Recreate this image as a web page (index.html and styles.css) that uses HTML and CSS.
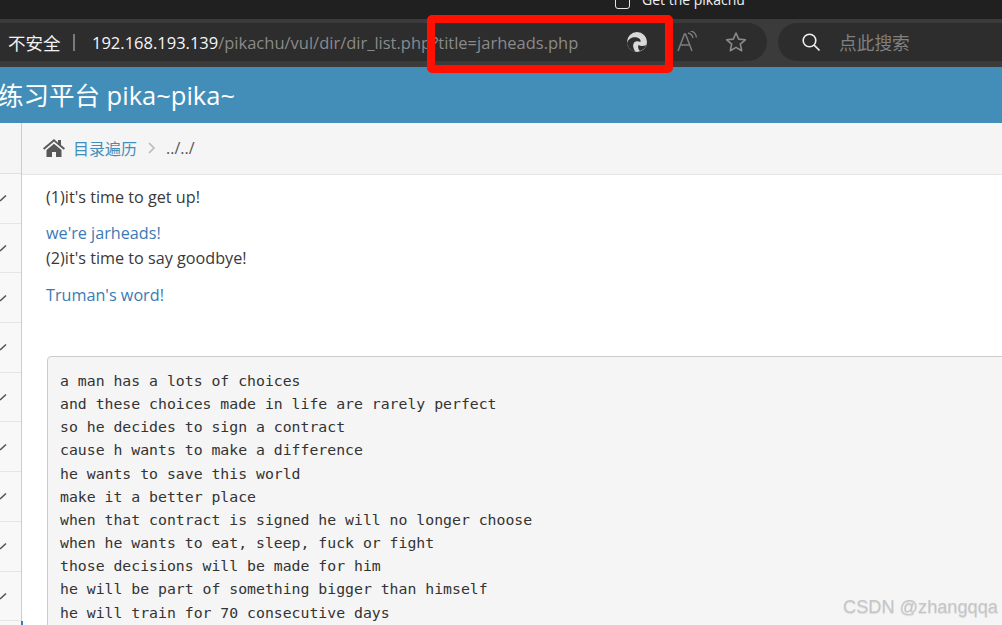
FILE: index.html
```html
<!DOCTYPE html>
<html lang="zh">
<head>
<meta charset="utf-8">
<title>Get the pikachu</title>
<link rel="stylesheet" href="styles.css">
</head>
<body>
<div class="tabbar">
  <span class="tab-icon"></span>
  <span class="tab-title">Get the pikachu</span>
</div>
<div class="toolbar">
  <div class="address">
    <span class="secure">不安全</span>
    <span class="divider"></span>
    <span class="url"><span class="host">192.168.193.139</span>/pikachu/vul/dir/dir_list.php?title=jarheads.php</span>
    <svg class="edge" viewBox="0 0 20 20" width="20" height="20">
      <circle cx="10" cy="10" r="10" fill="#d8d8d8"/>
      <path d="M0 11C1.500 6.500 6 4.500 10 5.500c2.800.7 4 2.600 3.500 4.500-2.500-1.300-5.500-1-6.800 1.200-1.200 2-.6 4.800 1.600 8.500C4 19 .8 15.500 0 11z" fill="#2d2d2d"/>
      <path d="M11.500 13c2 1.300 4.800 1.300 8 0-1.100 2.700-3.500 5-6.500 6-1.700-1.500-2.500-4.200-1.500-6z" fill="#2d2d2d"/>
    </svg>
    <svg class="readaloud" viewBox="0 0 24 22" width="24" height="22">
      <path d="M1 20 7.500 3h1L15 20M3.500 14h9" fill="none" stroke="#7d7d7d" stroke-width="1.500"/>
      <path d="M11 2c3 .5 4.500 2.500 5 5M13.500 0c3.500.5 5.500 3 6 6.500" fill="none" stroke="#7d7d7d" stroke-width="1.300"/>
    </svg>
    <svg class="star" viewBox="0 0 22 22" width="22" height="22">
      <path d="M11 2l2.700 6.100 6.600.7-5 4.400 1.400 6.500L11 16.400l-5.700 3.300 1.400-6.500-5-4.400 6.600-.7z" fill="none" stroke="#8a8a8a" stroke-width="1.600" stroke-linejoin="round"/>
    </svg>
  </div>
  <div class="search">
    <svg class="search-icon" viewBox="0 0 20 20" width="20" height="20">
      <circle cx="8.500" cy="8.500" r="6.300" fill="none" stroke="#f0f0f0" stroke-width="1.600"/>
      <path d="M13 13l5.500 5.500" stroke="#f0f0f0" stroke-width="1.700"/>
    </svg>
    <span class="search-text">点此搜索</span>
  </div>
</div>
<header class="site-header">练习平台 pika~pika~</header>
<div class="layout">
  <aside class="sidebar">
    <div class="side-top"></div>
    <div class="side-row"><svg class="check" viewBox="0 0 8 10" width="8" height="10"><path d="M0 8l6-5.500" stroke="#4a5560" stroke-width="1.600"/></svg></div>
    <div class="side-row"><svg class="check" viewBox="0 0 8 10" width="8" height="10"><path d="M0 8l6-5.500" stroke="#4a5560" stroke-width="1.600"/></svg></div>
    <div class="side-row"><svg class="check" viewBox="0 0 8 10" width="8" height="10"><path d="M0 8l6-5.500" stroke="#4a5560" stroke-width="1.600"/></svg></div>
    <div class="side-row"><svg class="check" viewBox="0 0 8 10" width="8" height="10"><path d="M0 8l6-5.500" stroke="#4a5560" stroke-width="1.600"/></svg></div>
    <div class="side-row"><svg class="check" viewBox="0 0 8 10" width="8" height="10"><path d="M0 8l6-5.500" stroke="#4a5560" stroke-width="1.600"/></svg></div>
    <div class="side-row"><svg class="check" viewBox="0 0 8 10" width="8" height="10"><path d="M0 8l6-5.500" stroke="#4a5560" stroke-width="1.600"/></svg></div>
    <div class="side-row"><svg class="check" viewBox="0 0 8 10" width="8" height="10"><path d="M0 8l6-5.500" stroke="#4a5560" stroke-width="1.600"/></svg></div>
    <div class="side-row"><svg class="check" viewBox="0 0 8 10" width="8" height="10"><path d="M0 8l6-5.500" stroke="#4a5560" stroke-width="1.600"/></svg></div>
    <div class="side-row"><svg class="check" viewBox="0 0 8 10" width="8" height="10"><path d="M0 8l6-5.500" stroke="#4a5560" stroke-width="1.600"/></svg></div>
  </aside>
  <main class="content">
    <nav class="breadcrumb">
      <svg class="home" viewBox="0 0 22 18" width="22" height="18">
        <path d="M11 0 0 9.300l1.300 1.500L11 2.600l9.700 8.200 1.300-1.500-4-3.400V1h-3v2.700z" fill="#585858"/>
        <path d="M3.500 11 11 4.700l7.500 6.300V18h-5.500v-5H9v5H3.500z" fill="#585858"/>
      </svg>
      <a class="crumb-link">目录遍历</a>
      <svg class="chevron" viewBox="0 0 8 12" width="8" height="12"><path d="M1 1l5 5-5 5" fill="none" stroke="#b8b8b8" stroke-width="1.500"/></svg>
      <span class="crumb-current">../../</span>
    </nav>
    <div class="body-text">
      <p class="line">(1)it's time to get up!</p>
      <p class="line link gap">we're jarheads!</p>
      <p class="line">(2)it's time to say goodbye!</p>
      <p class="line link gap-wide">Truman's word!</p>
      <pre class="lyrics">a man has a lots of choices
and these choices made in life are rarely perfect
so he decides to sign a contract
cause h wants to make a difference
he wants to save this world
make it a better place
when that contract is signed he will no longer choose
when he wants to eat, sleep, fuck or fight
those decisions will be made for him
he will be part of something bigger than himself
he will train for 70 consecutive days</pre>
    </div>
  </main>
</div>
<div class="side-marker"></div>
<div class="highlight"></div>
<div class="watermark">CSDN @zhangqqa</div>
</body>
</html>
```
FILE: styles.css
```css
* { box-sizing: border-box; }
html, body { margin: 0; height: 625px; overflow: hidden; }
body {
  position: relative;
  width: 1002px;
  background: #fff;
  font-family: "Open Sans", "Noto Sans CJK SC", sans-serif;
  color: #393939;
  display: flex;
  flex-direction: column;
}
.tabbar {
  height: 19px;
  flex: none;
  background: #202020;
  display: flex;
  align-items: flex-end;
  padding-left: 615px;
  overflow: hidden;
  color: #f0f0f0;
  font-family: "Open Sans", sans-serif;
  font-size: 14px;
}
.tab-icon {
  width: 15px;
  height: 14px;
  margin-bottom: 10px;
  border: 1.5px solid #e4e4e4;
  border-radius: 3px;
}
.tab-title { margin-left: 12px; line-height: 16px; margin-bottom: 11px; }
.toolbar {
  height: 48px;
  flex: none;
  background: #3b3b3b;
  display: flex;
  padding: 4px 0 6px;
  gap: 11px;
}
.address {
  width: 767px;
  background: #2d2d2d;
  border-radius: 0 19px 19px 0;
  display: flex;
  align-items: center;
  padding-left: 8px;
}
.secure {
  color: #f2f2f2;
  font-size: 17.500px;
  font-family: "Noto Sans CJK SC", sans-serif;
  width: 53px;
  white-space: nowrap;
}
.divider { width: 2px; height: 17px; background: #7a7a7a; margin-left: 12px; }
.url {
  margin-left: 17px;
  width: 500px;
  flex: none;
  color: #8a8a8a;
  font-size: 16.500px;
  white-space: nowrap;
}
.host { color: #f6f6f6; }
.edge { margin-left: 35px; flex: none; }
.readaloud { margin-left: 30px; flex: none; }
.star { margin-left: 24px; flex: none; }
.search {
  flex: 1;
  background: #2d2d2d;
  border-radius: 19px 0 0 19px;
  display: flex;
  align-items: center;
  padding-left: 23px;
}
.search-text {
  margin-left: 18px;
  color: #808080;
  font-size: 17.700px;
  font-family: "Noto Sans CJK SC", sans-serif;
}
.site-header {
  height: 56px;
  flex: none;
  background: #438eb9;
  color: #fff;
  font-size: 25.500px;
  line-height: 56px;
  text-indent: -2px;
  white-space: nowrap;
}
.layout { flex: 1; display: flex; min-height: 0; }
.sidebar {
  width: 22px;
  flex: none;
  background: #f8f8f8;
  border-right: 1px solid #ccc;
  overflow: hidden;
}
.side-top { height: 51px; background: #f5f5f5; border-bottom: 1px solid #e0e0e0; }
.side-row {
  height: 49.700px;
  border-bottom: 1px solid #e5e5e5;
  display: flex;
  align-items: center;
}
.check { flex: none; }
.side-marker {
  position: absolute;
  left: 21px;
  top: 621px;
  width: 2px;
  height: 4px;
  background: #2283c5;
}
.content { flex: 1; min-width: 0; overflow: hidden; }
.breadcrumb {
  height: 52px;
  background: #f5f5f5;
  border-bottom: 1px solid #e5e5e5;
  display: flex;
  align-items: center;
  padding: 0 0 2px 21px;
}
.crumb-link {
  margin-left: 8px;
  color: #438eb9;
  font-size: 16px;
  font-family: "Noto Sans CJK SC", sans-serif;
}
.chevron { margin-left: 11px; }
.crumb-current { margin-left: 10px; font-size: 16px; color: #555; }
.body-text { padding: 10px 0 0 24px; }
.line { margin: 0; font-size: 16.200px; line-height: 25px; color: #393939; }
.line.gap { margin-top: 11px; }
.line.gap-wide { margin-top: 12px; }
.line.link { color: #3b7ab5; }
.lyrics {
  margin: 48px -10px 0 1px;
  padding: 12px 12px;
  background: #f5f5f5;
  border: 1px solid #ccc;
  border-radius: 4px;
  font-family: "DejaVu Sans Mono", monospace;
  font-size: 14.800px;
  line-height: 23.150px;
  color: #333;
}
.highlight {
  position: absolute;
  left: 427px;
  top: 15px;
  width: 246px;
  height: 58px;
  border: 8px solid #ff1000;
  border-radius: 5px;
}
.watermark {
  position: absolute;
  left: 843px;
  top: 597px;
  font-family: "Liberation Sans", sans-serif;
  font-size: 18.200px;
  line-height: 20px;
  color: #c6c6c6;
  text-shadow: 0 1px 1px rgba(0,0,0,0.1);
  white-space: nowrap;
}
```
